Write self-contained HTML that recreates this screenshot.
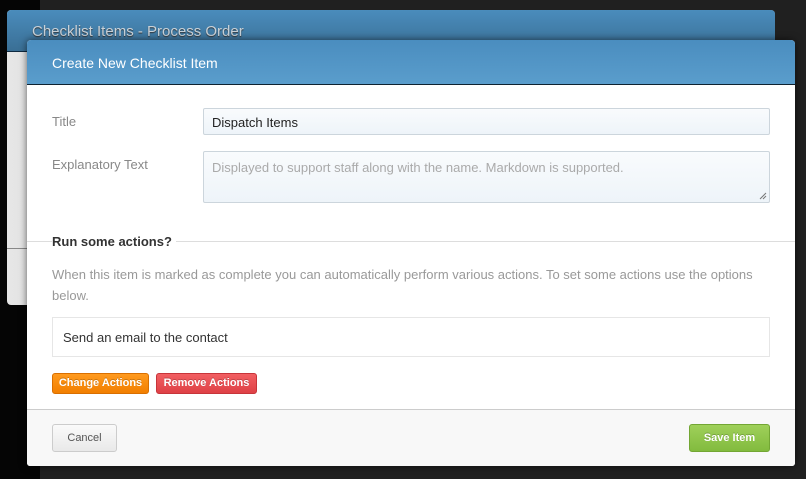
<!DOCTYPE html>
<html><head><meta charset="utf-8"><style>
*{box-sizing:border-box;margin:0;padding:0}
body{width:806px;height:479px;overflow:hidden;background:#202020;font-family:"Liberation Sans",sans-serif;position:relative}
.lstrip{position:absolute;left:0;top:0;width:40px;height:479px;background:#050505}
.back{position:absolute;left:7px;top:10px;width:768px;height:295px;border-radius:4px;background:linear-gradient(90deg,#e6e6e6,#999);overflow:hidden}
.back .hd{height:42px;background:linear-gradient(#4a8cbc,#3a6f95);border-bottom:1px solid #0e2a40;color:#c9d2d9;font-size:15px;padding:13px 0 0 25px;text-shadow:0 1px 1px #333}
.back .ln{position:absolute;left:0;top:238px;width:100%;border-top:1px solid #888}
.front{position:absolute;left:27px;top:40px;width:768px;height:426px;background:#fff;border-radius:4px 4px 3px 3px;overflow:hidden;box-shadow:0 0 8px rgba(0,0,0,.6)}
.hd2{height:45px;background:linear-gradient(#4a8dbf,#5a9dcc);border-bottom:1px solid #0f2230;color:#fff;font-size:14px;padding:15px 0 0 25px}
.lbl{position:absolute;left:25px;font-size:13px;color:#888}
.inp{position:absolute;left:176px;width:567px;border:1px solid #ccd5dc;background:linear-gradient(#f9fbfd,#eef4f9);border-radius:2px;font-size:13px;padding:6px 8px}
.sep{position:absolute;left:0;width:100%;border-top:1px solid #ddd}
.leg{position:absolute;left:25px;top:194px;font-size:13px;font-weight:bold;color:#333;background:#fff;padding-right:4px}
.p{position:absolute;left:25px;top:224px;width:725px;font-size:13px;line-height:21px;color:#999}
.box{position:absolute;left:25px;top:277px;width:718px;height:40px;border:1px solid #e6e6e6;font-size:13px;color:#333;padding:12px 10px}
.btn{position:absolute;height:21px;font-size:11px;font-weight:bold;color:#fff;border-radius:3px;text-align:center;line-height:19px;text-shadow:0 -1px 0 rgba(0,0,0,.2)}
.ftr{position:absolute;left:0;top:369px;width:100%;height:57px;background:#f8f8f8;border-top:1px solid #ccc}
</style></head><body>
<div class="lstrip"></div>
<div class="back"><div class="hd">Checklist Items - Process Order</div><div class="ln"></div></div>
<div class="front">
<div class="hd2">Create New Checklist Item</div>
<div class="lbl" style="top:74px">Title</div>
<div class="inp" style="top:68px;height:27px;color:#222">Dispatch Items</div>
<div class="lbl" style="top:117px">Explanatory Text</div>
<div class="inp" style="top:111px;height:52px;color:#aaa;padding-top:8px">Displayed to support staff along with the name. Markdown is supported.
<svg style="position:absolute;right:2px;bottom:2px" width="8" height="8"><path d="M1 7L7 1M4 7L7 4" stroke="#777" stroke-width="1"/></svg></div>
<div class="sep" style="top:201px"></div>
<div class="leg">Run some actions?</div>
<div class="p">When this item is marked as complete you can automatically perform various actions. To set some actions use the options below.</div>
<div class="box">Send an email to the contact</div>
<div class="btn" style="left:25px;top:333px;width:97px;background:linear-gradient(#ff9a1e,#f27f00);border:1px solid #d96f00">Change Actions</div>
<div class="btn" style="left:129px;top:333px;width:101px;background:linear-gradient(#f25f62,#df4146);border:1px solid #c7353a">Remove Actions</div>
<div class="ftr">
<div class="btn" style="left:25px;top:14px;width:65px;height:28px;line-height:26px;color:#555;text-shadow:none;font-weight:normal;background:linear-gradient(#fafafa,#e9e9e9);border:1px solid #ccc">Cancel</div>
<div class="btn" style="left:662px;top:14px;width:81px;height:28px;line-height:26px;background:linear-gradient(#9fd05a,#82bb3e);border:1px solid #73a634">Save Item</div>
</div>
</div>
</body></html>
